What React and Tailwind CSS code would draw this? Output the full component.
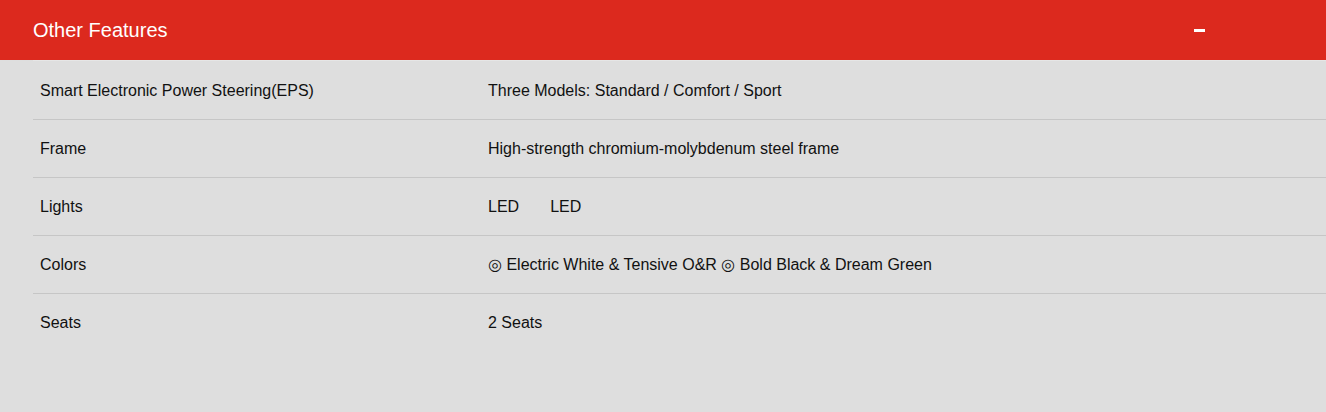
import React from "react";

const rows = [
  { label: "Smart Electronic Power Steering(EPS)", value: "Three Models: Standard / Comfort / Sport" },
  { label: "Frame", value: "High-strength chromium-molybdenum steel frame" },
  { label: "Lights", value: null },
  { label: "Colors", value: "◎ Electric White & Tensive O&R ◎ Bold Black & Dream Green" },
  { label: "Seats", value: "2 Seats" },
];

export default function App() {
  return (
    <div className="w-[1326px] h-[412px] bg-[#dedede] font-['Liberation_Sans',Arial,sans-serif] overflow-hidden">
      <div className="h-[60px] bg-[#dc291e] flex items-center justify-between pl-[33px] pr-[121px]">
        <h2 className="text-[20px] text-white">Other Features</h2>
        <div className="w-[11px] h-[3px] bg-white" />
      </div>

      <div className="ml-[33px] border-t border-[#e6e6e6]">
        {rows.map((row, i) => (
          <div
            key={row.label}
            className={`flex items-center text-[16px] text-[#111] ${
              i === 0 ? "h-[59px] pt-[1px]" : "h-[58px]"
            } ${i < rows.length - 1 ? "border-b border-[#c6c6c6]" : ""}`}
          >
            <div className="w-[448px] pl-[7px]">{row.label}</div>
            <div className="pl-[7px]">
              {row.value ?? (
                <span>
                  LED<span className="ml-[31px]">LED</span>
                </span>
              )}
            </div>
          </div>
        ))}
      </div>
    </div>
  );
}
